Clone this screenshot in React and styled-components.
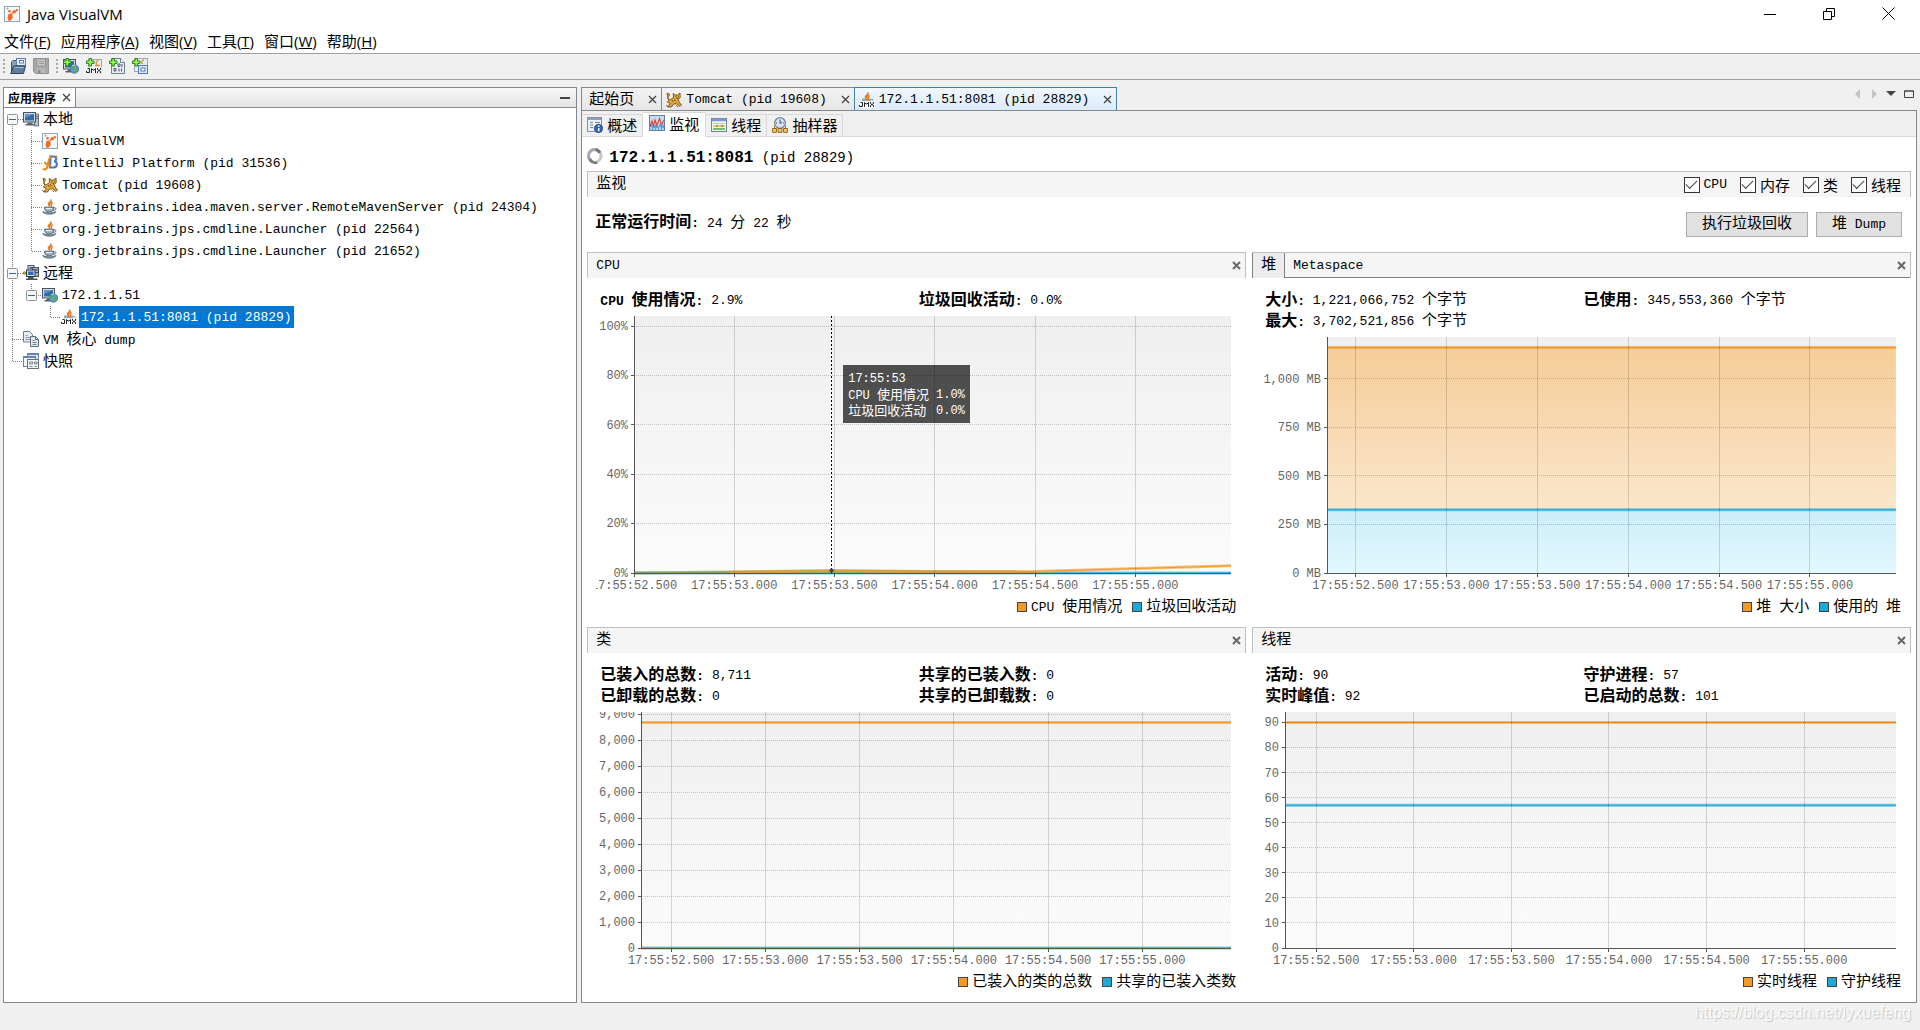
import styled, { createGlobalStyle } from 'styled-components';

const mono = '"Liberation Mono", "Noto Sans CJK SC", monospace';
const ui = '"Open Sans", "Noto Sans CJK SC", sans-serif';

const GlobalStyle = createGlobalStyle`
  * { box-sizing: border-box; }
  body { margin: 0; background: #f0f0f0; color: #000; font: 13px/20px ${mono}; }
  button { margin: 0; padding: 0; border: 0; background: none; color: inherit; font: inherit; }
  svg { display: block; flex: none; }
  h1, h2, ul { margin: 0; padding: 0; font: inherit; list-style: none; }
`;

/* ---------- text ---------- */

const Cjk = styled.span`
  font-family: "Noto Sans CJK SC", sans-serif;
  font-size: ${(props) => props.$size}px;
  line-height: 1;
`;

// Chinese runs are set a little larger than the latin ones
const Mixed = ({ children, size = 15 }) =>
  children.split(/([\u2e80-\uffef]+)/).map((part, i) =>
    i % 2 ? <Cjk key={i} $size={size}>{part}</Cjk> : part
  );

/* ---------- icons ---------- */

const Icon = ({ children, size = 16 }) => (
  <svg width={size} height={size} viewBox="0 0 16 16" aria-hidden="true">{children}</svg>
);

const VisualVmIcon = () => (
  <Icon>
    <rect x="0.5" y="0.5" width="15" height="15" fill="#f4f8fc" stroke="#8fa6bd" />
    <path d="M4.500 8 7 7.500l1.500 1.500.3 2.500L7 14.500l-2.600.3L3.500 12z" fill="#f26a21" />
    <path d="M7.500 8 9.500 6.500" stroke="#f26a21" strokeWidth="1.200" />
    <circle cx="10.300" cy="5.800" r="1.700" fill="#f26a21" />
    <circle cx="12.800" cy="4.300" r="1.200" fill="#f26a21" />
    <circle cx="5.500" cy="5.300" r="1.300" fill="#f26a21" />
    <circle cx="3.500" cy="2.600" r="1" fill="#f58a4c" />
  </Icon>
);

const IdeaIcon = () => (
  <Icon>
    <path d="M8.500 1.500h3.200c3.400 0 3.200 4.200.4 4.800 4 .2 3.600 6.200-.6 6.200H8z" fill="none" stroke="#4a78c8" strokeWidth="2.200" />
    <path d="M6.500 5.500C8 3 9 1.500 7.200 1M7 4 5.600 11c-.5 3.400-3.600 4.400-4.600 2.600M2.500 7c2 3 4 4 6.500 3.500" fill="none" stroke="#ef8a12" strokeWidth="2" />
    <circle cx="14.500" cy="1.500" r="1" fill="#ef8a12" />
  </Icon>
);

const TomcatIcon = () => (
  <Icon>
    <path d="M1 1.500c3-.8 3 2 1.200 3.500C.8 7 3 8 4.500 7.500L7.500 5.500 7.200 1.500 9.300 3h2.200L14 1l.2 4.500-1.800 2L13 10l2.500 3-1.500 1.500-3.200-2.700L7.500 12l-2 3H2l2.300-3.500L1.200 10l1.600-1.600z" fill="#d9a441" stroke="#7a4e0c" strokeWidth="0.900" />
    <path d="M9.500 4.800h.8M12 4.800h.8M10.300 6.300h1.800M6 8l1 1.500M8.500 7.500l.7 1.600M10.500 13.500l1.500 1.300M.5 13l1.500 2" stroke="#5b3908" strokeWidth="0.900" />
  </Icon>
);

const Flame = () => (
  <path d="M8.500.2c1.300 2-3.200 3-2.400 5.200.3 1 1.200 1.600 1.200 2.400 1-.8.4-1.600.8-2.600.6-1.400 3.200-1.800.4-5zM10.800 3.500C8.700 4.500 8.600 6 9.200 8c1-1 .3-2.700 1.600-4.500z" fill="#ea7d1e" stroke="#d9640a" strokeWidth="0.500" />
);

const JavaIcon = () => (
  <Icon>
    <path d="M2.500 8.200h9.300c.3 3.200-1.500 4.600-4.600 4.600S2.500 11.500 2.500 8.200z" fill="#9fb2bf" stroke="#4f6675" />
    <path d="M11.800 8.800c3-.6 3 2.400-.6 2.700" fill="none" stroke="#4f6675" />
    <path d="M.8 12.500c1 3.600 12 3.600 13.200 0-3 1.800-10 1.800-13.200 0z" fill="#8298a6" stroke="#4f6675" strokeWidth="0.800" />
    <path d="M4 9.500h6" stroke="#e8f0f5" />
    <Flame />
  </Icon>
);

const JmxMark = () => (
  <>
    <rect x="0" y="9" width="16" height="7" fill="#fff" fillOpacity="0.7" />
    <path d="M1.500 10.500h2v4h-3v-1.500M5.500 15v-4.500l1.500 1.500h1l1.500-1.500V15M11.500 10v1.500l3 2V15M14.500 10v1.500l-3 2V15" fill="none" stroke="#222" />
  </>
);

const JmxIcon = () => (
  <Icon>
    <path d="M3 6.500h9v3H3z" fill="#93a8b6" />
    <path d="M12 7.500h2v1.500" fill="none" stroke="#93a8b6" />
    <Flame />
    <JmxMark />
  </Icon>
);

const Screen = () => (
  <>
    <rect x="0.500" y="1.500" width="12" height="9.500" fill="#d5dce3" stroke="#47525e" />
    <rect x="2" y="3" width="9" height="6.500" fill="#2f6cab" />
    <path d="M2 3h9L2 7z" fill="#5d97cf" />
    <path d="M4.500 11.500h5v1.500h2.500v1.500H2.500V13h2z" fill="#57626d" />
  </>
);

const Globe = () => (
  <>
    <circle cx="11.500" cy="11" r="4.300" fill="#5b9bd0" stroke="#44738f" strokeWidth="0.800" />
    <path d="M8.500 8.500l2.500-1.200 1 2-1.500 2-2-.5zM12.500 10.500l2.500-.5-.5 3-2 1.500z" fill="#63a93c" />
    <path d="M9 7.800c1-.8 2.500-1 3.500-.5" fill="none" stroke="#e4f2fb" strokeWidth="0.800" />
  </>
);

const Plus = () => (
  <path d="M3 .5h2.500V3H8v2.500H5.500V8H3V5.500H.5V3H3z" fill="#a5ef5a" stroke="#1f8a10" />
);

const LocalIcon = () => (
  <Icon>
    <path d="M11.500 3h4v12h-4z" fill="#b9c2cb" stroke="#68727c" />
    <path d="M13 5.500h2M13 7.500h2" stroke="#68727c" />
    <Screen />
  </Icon>
);

const HostIcon = () => <Icon><Screen /><Globe /></Icon>;

const RemoteIcon = () => (
  <Icon>
    <rect x="5" y="0.500" width="6" height="5" fill="#d5dce3" stroke="#47525e" />
    <rect x="6.500" y="2" width="3" height="2" fill="#2f6cab" />
    <rect x="9.500" y="2.500" width="6" height="9" fill="#aab4be" stroke="#47525e" />
    <path d="M10 5h5M10 7.500h5" stroke="#47525e" />
    <rect x="3.500" y="5" width="8.500" height="6.500" fill="#d5dce3" stroke="#303a44" />
    <rect x="5" y="6.500" width="5.500" height="3.500" fill="#2f6cab" />
    <path d="M5 12h5.500v1.500h4V15H3v-1.500h2z" fill="#4b5560" />
    <circle cx="1.500" cy="8" r="1.300" fill="#e6a93c" stroke="#8a5a0e" strokeWidth="0.700" />
  </Icon>
);

const DumpIcon = () => (
  <Icon>
    <path d="M.5.500h6l3 3V11h-9z" fill="#e9eef3" stroke="#71808f" />
    <path d="M2.500 4.500h2M2.500 6.500h5M2.500 8.500h5" stroke="#8694a2" />
    <path d="M7.500 5.500h5l3 3v7h-8z" fill="#e1e8ee" stroke="#5e6d7c" />
    <path d="M9.500 9.500h2M9.500 11.500h4M9.500 13.500h4" stroke="#71808f" />
    <path d="M12.500 5.500v3h3" fill="none" stroke="#5e6d7c" />
  </Icon>
);

const SnapshotIcon = () => (
  <Icon>
    <rect x="4.500" y="0.500" width="11" height="9" fill="#dfe8f4" stroke="#6683b4" />
    <path d="M5 1.500h10" stroke="#6683b4" />
    <rect x="0.500" y="3.500" width="12" height="10" fill="#eef3f9" stroke="#6683b4" />
    <path d="M1 4.500h11" stroke="#6683b4" />
    <rect x="4.500" y="6.500" width="11" height="9" fill="#f2f4f6" stroke="#68727c" />
    <path d="M6.500 9h3v2h-3zM11.500 9h2.500v2h-2.500zM6.500 13.500h3M11.500 13.500H14" fill="none" stroke="#7a8590" />
  </Icon>
);

const OpenIcon = () => (
  <Icon>
    <path d="M1.500 14V4l1.500-1.500h4V14z" fill="#8aa0b4" stroke="#40566b" />
    <rect x="6.500" y="0.500" width="9" height="7" fill="#e8effa" stroke="#5a7cb8" />
    <rect x="9.500" y="2.500" width="4" height="2.500" fill="#fff" stroke="#5a7cb8" />
    <path d="M3.500 8h12L13.500 15.500H.8z" fill="#5e7f9c" stroke="#2d4459" />
    <path d="M4.500 9.500h9" stroke="#a9bdce" />
  </Icon>
);

const SaveIcon = () => (
  <Icon>
    <path d="M.5.500h15v15h-13l-2-2z" fill="#a8a8a8" stroke="#949494" />
    <path d="M4 1h8.500v7H4z" fill="#c8c8c8" stroke="#949494" />
    <path d="M6 3.500h5M6 5.500h5" stroke="#999" />
    <path d="M4 10.500h8V15H4z" fill="#b9b9b9" />
    <path d="M5 12h2.500v3H5z" fill="#8c8c8c" />
  </Icon>
);

const AddHostIcon = () => <Icon><Screen /><Globe /><Plus /></Icon>;

const AddJmxIcon = () => (
  <Icon>
    <rect x="2.500" y="1.500" width="13" height="14" fill="#e6edf4" stroke="#9aa8b6" />
    <path d="M12.500 2c-3.500 2.500-2.500 3-1.500 5M9 7.500h5" fill="none" stroke="#e58a35" strokeWidth="1.300" />
    <JmxMark />
    <Plus />
  </Icon>
);

const AddDumpIcon = () => (
  <Icon>
    <path d="M2.500.500h9l4 4v11h-13z" fill="#e8eef3" stroke="#71808f" />
    <path d="M11.500.500v4h4" fill="#fff" stroke="#71808f" />
    <path d="M9 6h2v2.500H9zM13 6v3M5 10.500h2V13H5zM10 10.500v3M12.500 10.500v3" fill="none" stroke="#4d5c6b" />
    <Plus />
  </Icon>
);

const AddSnapshotIcon = () => (
  <Icon>
    <rect x="2.500" y="0.500" width="13" height="13" fill="#e6edf4" stroke="#9aa8b6" />
    <path d="M12 1.500c-3.500 2.500-2.500 2.500-1.500 4.500" fill="none" stroke="#e58a35" strokeWidth="1.300" />
    <rect x="6.500" y="7.500" width="9" height="8" fill="#dfe9f8" stroke="#5179bd" />
    <rect x="9" y="10" width="4" height="3" fill="#fff" stroke="#5179bd" />
    <Plus />
  </Icon>
);

const OverviewIcon = () => (
  <Icon>
    <rect x="0.500" y="0.500" width="14" height="14" fill="#e9eff5" stroke="#8293a5" />
    <path d="M1 2h13" stroke="#8fa3b8" strokeWidth="2" />
    <path d="M3 5.500h3M3 8h3M3 10.500h3M8 5.500h5" stroke="#71869c" />
    <circle cx="11.500" cy="11.500" r="4.200" fill="#2f62b5" stroke="#1d458c" strokeWidth="0.700" />
    <path d="M11.700 8.500v1.400M11.700 11v3.300" stroke="#fff" strokeWidth="1.500" />
  </Icon>
);

const MonitorIcon = () => (
  <Icon>
    <rect x="0.500" y="0.500" width="15" height="15" fill="#c9dced" stroke="#5d7fa3" />
    <path d="M1 10.500 3 8l1.500 3L7 9l2 3 2.500-4 1.500 3 2-2v6H1z" fill="#59a4da" />
    <path d="M1 11l2-5 1.500 4.500L6 5l2 5.500L10.500 3.500 12.500 10l2.500-5" fill="none" stroke="#d94a4a" strokeWidth="1.200" />
    <path d="M2 15v-3M5 15v-2M8 15v-2M11 15v-3M14 15v-2" stroke="#fff" />
  </Icon>
);

const ThreadsIcon = () => (
  <Icon>
    <rect x="0.500" y="1.500" width="15" height="13" fill="#f3f6f0" stroke="#71869c" />
    <path d="M1 3h14" stroke="#7d9ac0" strokeWidth="2.500" />
    <path d="M2 6.500h12" stroke="#b9c4cf" />
    <path d="M2 9h12" stroke="#e6b63a" strokeWidth="1.500" />
    <path d="M2 12h12" stroke="#4fa83d" strokeWidth="1.500" />
    <path d="M5 9h2M10 9h2" stroke="#4fa83d" strokeWidth="1.500" />
  </Icon>
);

const SamplerIcon = () => (
  <Icon>
    <circle cx="8" cy="6" r="5.300" fill="#d6e4f1" stroke="#71869c" strokeWidth="1.300" />
    <path d="M8 2.500V6.500L10 5M4 6h1M11 6h1" fill="none" stroke="#3f546a" />
    <path d="M2.500 11V8.500M13.500 11V8.500" stroke="#a87a1e" />
    <path d="M.6 11.500h3.800v3.800H.6zM6.100 11.500h3.800v3.800H6.100zM11.600 11.500h3.800v3.800h-3.800z" fill="#f2cf72" stroke="#93600c" />
  </Icon>
);

const SpinnerIcon = () => (
  <svg width="16" height="18" viewBox="0 0 16 18" aria-hidden="true">
    <path d="M8 2.500a6 6.500 0 0 1 5 3.500" fill="none" stroke="#6f737b" strokeWidth="3" />
    <path d="M13.500 6a6 6.500 0 0 1-4 9" fill="none" stroke="#c6c8cd" strokeWidth="3" />
    <path d="M10 15.300A6 6.500 0 0 1 2.500 11.500" fill="none" stroke="#777b84" strokeWidth="3" />
    <path d="M2.300 12A6 6.500 0 0 1 8.500 2.500" fill="none" stroke="#a3a6ad" strokeWidth="3" />
  </svg>
);

const CrossIcon = ({ bold }) => (
  <svg width="9" height="9" viewBox="0 0 9 9" aria-hidden="true">
    <path d="M1 1l7 7M8 1 1 8" stroke={bold ? '#666' : '#444'} strokeWidth={bold ? 2 : 1.300} />
  </svg>
);

/* ---------- window frame ---------- */

const Window = styled.div`
  display: flex;
  flex-direction: column;
  min-height: 100vh;
`;

const TitleBar = styled.header`
  display: flex;
  align-items: center;
  height: 29px;
  padding: 0 6px 2px 4px;
  gap: 7px;
  background: #fff;
  font: 15px/20px ${ui};
`;

const WindowTitle = styled.h1`
  flex: 1;
`;

const WindowButton = styled.button`
  display: grid;
  place-items: center;
  width: 52px;
  height: 27px;
`;

const MenuBar = styled.nav`
  display: flex;
  height: 24px;
  padding: 0 4px;
  gap: 10px;
  background: #fff;
  font: 15px/24px ${ui};
`;

const ToolBar = styled.div`
  display: flex;
  align-items: center;
  height: 27px;
  padding: 0 3px 2px;
  gap: 7px;
  border-top: 1px solid #a0a0a0;
  border-bottom: 1px solid #a0a0a0;
`;

const Grip = styled.span`
  width: 2px;
  height: 14px;
  margin-right: -2px;
  background: repeating-linear-gradient(#aaa 0 2px, transparent 2px 4px);
`;

const Workspace = styled.main`
  display: grid;
  grid-template-columns: 43fr 100fr;
  flex: 1;
  gap: 4px;
  padding: 7px 3px 0;
`;

const Footer = styled.footer`
  height: 27px;
  padding: 0 9px;
  color: #fafafa;
  font: 16px/20px "Liberation Sans", sans-serif;
  text-align: right;
  text-shadow: 1px 1px 1px #c4c4c4;
`;

/* ---------- applications tree ---------- */

const SidePanel = styled.aside`
  border: 1px solid #828790;
  background: #fff;
`;

const SideHeader = styled.div`
  display: flex;
  justify-content: space-between;
  height: 20px;
  border-bottom: 1px solid #828790;
  background: linear-gradient(#f7f7f7, #e4e4e4);
`;

const SideTab = styled.div`
  display: flex;
  align-items: center;
  gap: 6px;
  padding: 0 4px;
  border-right: 1px solid #828790;
  background: #fff;
  font-weight: bold;
`;

const MinimizeButton = styled.button`
  width: 10px;
  margin-right: 6px;
`;

const TreeRow = styled.li`
  display: flex;
  align-items: center;
  height: 22px;
  white-space: pre;
`;

const NodeLabel = styled.span`
  height: 22px;
  margin-left: 2px;
  padding: 2px 2px 0;
  line-height: 20px;
  color: ${(props) => (props.$selected ? '#fff' : '#000')};
  background: ${(props) => (props.$selected ? '#0078d7' : 'transparent')};
`;

const guidePaths = {
  none: '',
  line: 'M8.500 0V22',
  tee: 'M8.500 0V22M8 11.500H19',
  end: 'M8.500 0V11.500H19',
  first: 'M8.500 12V22M8 11.500H19',
  lastBox: 'M8.500 0V11.500H19',
  midBox: 'M8.500 0V22M8 11.500H19',
};

const Guide = ({ kind }) => {
  const box = kind === 'first' || kind === 'lastBox' || kind === 'midBox';
  const drawing = (
    <svg width="19" height="22" viewBox="0 0 19 22" aria-hidden="true">
      <path d={guidePaths[kind]} fill="none" stroke="#808080" strokeDasharray="1 1" shapeRendering="crispEdges" />
      {box && (
        <>
          <rect x="3.500" y="6.500" width="10" height="10" rx="1" fill="#f8f8f8" stroke="#919191" />
          <path d="M5 11.500h7" stroke="#3b5fa8" />
        </>
      )}
    </svg>
  );
  return box ? <button aria-label="折叠">{drawing}</button> : drawing;
};

const treeNodes = [
  { guides: ['first'], icon: LocalIcon, label: '本地' },
  { guides: ['line', 'tee'], icon: VisualVmIcon, label: 'VisualVM' },
  { guides: ['line', 'tee'], icon: IdeaIcon, label: 'IntelliJ Platform (pid 31536)' },
  { guides: ['line', 'tee'], icon: TomcatIcon, label: 'Tomcat (pid 19608)' },
  { guides: ['line', 'tee'], icon: JavaIcon, label: 'org.jetbrains.idea.maven.server.RemoteMavenServer (pid 24304)' },
  { guides: ['line', 'tee'], icon: JavaIcon, label: 'org.jetbrains.jps.cmdline.Launcher (pid 22564)' },
  { guides: ['line', 'end'], icon: JavaIcon, label: 'org.jetbrains.jps.cmdline.Launcher (pid 21652)' },
  { guides: ['midBox'], icon: RemoteIcon, label: '远程' },
  { guides: ['line', 'lastBox'], icon: HostIcon, label: '172.1.1.51' },
  { guides: ['line', 'none', 'end'], icon: JmxIcon, label: '172.1.1.51:8081 (pid 28829)', selected: true },
  { guides: ['tee'], icon: DumpIcon, label: 'VM 核心 dump' },
  { guides: ['end'], icon: SnapshotIcon, label: '快照' },
];

const Applications = () => (
  <SidePanel>
    <SideHeader>
      <SideTab>
        <Mixed size={12}>应用程序</Mixed>
        <button aria-label="关闭"><CrossIcon /></button>
      </SideTab>
      <MinimizeButton aria-label="最小化">
        <svg width="10" height="2"><path d="M0 1h10" stroke="#444" strokeWidth="2" /></svg>
      </MinimizeButton>
    </SideHeader>
    <ul>
      {treeNodes.map(({ guides, icon: NodeIcon, label, selected }, i) => (
        <TreeRow key={i}>
          {guides.map((kind, n) => <Guide key={n} kind={kind} />)}
          <NodeIcon />
          <NodeLabel $selected={selected}><Mixed>{label}</Mixed></NodeLabel>
        </TreeRow>
      ))}
    </ul>
  </SidePanel>
);

/* ---------- documents ---------- */

const Documents = styled.section`
  display: flex;
  flex-direction: column;
  min-width: 0;
`;

const DocTabs = styled.div`
  display: flex;
  height: 23px;
`;

const DocTab = styled.div`
  display: flex;
  align-items: center;
  gap: 4px;
  padding: 0 4px;
  border: 1px solid ${(props) => (props.$active ? '#3c7fb1' : '#828790')};
  border-bottom: 0;
  border-right-width: ${(props) => (props.$active ? 1 : 0)}px;
  background: ${(props) => (props.$active ? 'linear-gradient(#f0f7fe, #dcebfc)' : 'linear-gradient(#f3f3f3, #e6e6e6)')};
`;

const DocTabButton = styled.button`
  display: flex;
  align-items: center;
  gap: 4px;
  padding-top: 2px;
  padding-left: ${(props) => (props.$plain ? 3 : 0)}px;
  margin-right: 10px;
  white-space: pre;
`;

const DocNav = styled.div`
  display: flex;
  gap: 8px;
  height: 14px;
  margin-left: auto;
  padding-right: 3px;
`;

const Frame = styled.div`
  display: flex;
  flex: 1;
  flex-direction: column;
  border: 1px solid #828790;
  background: #fff;
`;

const ViewTabs = styled.div`
  display: flex;
  align-items: flex-end;
  height: 26px;
  background: linear-gradient(#f0f0f0 0 25px, #d9d9d9 25px);
`;

const ViewTab = styled.button`
  display: flex;
  align-items: center;
  gap: 4px;
  height: ${(props) => (props.$active ? 25 : 23)}px;
  padding: ${(props) => (props.$active ? '0 6px 4px' : '0 5px 2px')};
  border: solid #d9d9d9;
  border-width: 1px 1px ${(props) => (props.$active ? 0 : 1)}px 0;
  background: ${(props) => (props.$active ? '#fff' : '#f0f0f0')};
`;

const SourceTitle = styled.h2`
  display: flex;
  align-items: center;
  gap: 6px;
  height: 34px;
  padding: 4px 5px 0;
  font-size: 14px;
  line-height: 24px;
  white-space: pre;
`;

const SourceText = styled.span`
  padding-top: 3px;
`;

const SourceName = styled.strong`
  font-size: 16px;
`;

const Content = styled.div`
  display: flex;
  flex: 1;
  flex-direction: column;
  padding: 0 5px;
`;

const SectionBar = styled.div`
  display: flex;
  align-items: center;
  justify-content: space-between;
  height: 26px;
  padding: 0 9px 0 8px;
  border: solid #bfbfbf;
  border-width: 1px 1px 0;
  background: #f5f5f5;
`;

const Checks = styled.div`
  display: flex;
  gap: 13px;
`;

const CheckLabel = styled.label`
  display: flex;
  align-items: center;
  gap: 4px;
  line-height: 18px;
`;

const CheckBox = styled.input`
  display: grid;
  place-items: center;
  width: 16px;
  height: 16px;
  margin: 0;
  appearance: none;
  border: 1px solid #333;
  background: #fff;

  &:checked::before {
    content: "";
    width: 10px;
    height: 5px;
    margin-bottom: 3px;
    border: solid #444;
    border-width: 0 0 1px 1px;
    transform: rotate(-45deg);
  }
`;

const Summary = styled.div`
  display: flex;
  justify-content: space-between;
  height: 55px;
  padding: 15px 9px 0 8px;
  white-space: pre;
`;

const Uptime = styled.div`
  line-height: 18px;
`;

const Actions = styled.div`
  display: flex;
  gap: 8px;
`;

const ActionButton = styled.button`
  height: 25px;
  padding: 0 15px;
  border: 1px solid #adadad;
  background: #e1e1e1;
`;

const Graphs = styled.div`
  display: grid;
  grid-template-columns: 1fr 1fr;
  grid-template-rows: 1fr 1fr;
  flex: 1;
  column-gap: 6px;
`;

/* ---------- graph panels ---------- */

const Panel = styled.section`
  display: flex;
  flex-direction: column;
  min-width: 0;
`;

const PanelBar = styled.div`
  display: flex;
  align-items: center;
  height: 26px;
  padding-right: 4px;
  padding-left: ${(props) => (props.$tabbed ? 0 : 8)}px;
  border: solid #bfbfbf;
  border-width: ${(props) => (props.$tabbed ? '1px 1px 0 0' : '1px 1px 0')};
  background: #f5f5f5;
  box-shadow: ${(props) => (props.$tabbed ? 'inset 0 -1px #808080' : 'none')};
`;

const PanelTab = styled.button`
  height: 25px;
  padding: 0 8px;
  border: solid #808080;
  border-width: ${(props) => (props.$active ? '0 1px 0 1px' : 0)};
  background: ${(props) => (props.$active ? '#ececec' : 'transparent')};
`;

const PanelClose = styled.button`
  margin-left: auto;
`;

const Details = styled.dl`
  display: grid;
  grid-template-columns: 1fr 1fr;
  margin: 12px 9px 5px 13px;
  line-height: 21px;
  white-space: pre;
`;

const Detail = styled.div`
  display: flex;
  height: 21px;
`;

const DetailName = styled.dt`
  font-weight: bold;
`;

const DetailValue = styled.dd`
  margin: 0;
`;

const ChartBox = styled.div`
  display: flex;
  flex: 1;
  min-height: 120px;
  margin-left: 9px;
  padding: 0 15px 24px ${(props) => props.$axis}px;
  overflow: hidden;
`;

const Plot = styled.div`
  position: relative;
  display: flex;
  flex: 1;
  background: linear-gradient(#efefef, #fbfbfb);
`;

const PlotSvg = styled.svg`
  flex: 1;
  min-width: 0;
  overflow: visible;
  font-size: 12px;
  fill: #666;
`;

const Tooltip = styled.div`
  position: absolute;
  top: 49px;
  left: 35%;
  display: grid;
  grid-template-columns: auto auto;
  column-gap: 7px;
  padding: 6px 5px 4px;
  background: rgba(0, 0, 0, 0.68);
  color: #fff;
  font-size: 12px;
  line-height: 16px;
  white-space: pre;
`;

const TooltipTime = styled.div`
  grid-column: 1 / 3;
`;

const TooltipCell = styled.div`
  height: 16px;
`;

const Legend = styled.div`
  display: flex;
  justify-content: flex-end;
  gap: 10px;
  height: 30px;
  padding-right: 10px;
  white-space: pre;
`;

const LegendItem = styled.span`
  display: flex;
  align-items: center;
  gap: 4px;
  height: 20px;
`;

const Swatch = styled.span`
  width: 10px;
  height: 10px;
  border: 1px solid #444;
  background: ${(props) => props.$color};
`;

const ORANGE = '#f39a26';
const BLUE = '#1fa8d8';
const times = ['17:55:52.500', '17:55:53.000', '17:55:53.500', '17:55:54.000', '17:55:54.500', '17:55:55.000'];
const pct = (n) => `${n}%`;

// series points are [x%, y%] measured from the top left of the plot
const SeriesLine = ({ points, color }) =>
  points.slice(1).map(([x, y], i) => {
    const [px, py] = points[i];
    const ends = { x1: pct(px), y1: pct(py), x2: pct(x), y2: pct(y), stroke: color };
    return (
      <g key={i}>
        <line {...ends} strokeWidth="3" opacity="0.6" />
        <line {...ends} strokeWidth="1" />
      </g>
    );
  });

const Chart = ({ axis, rows, firstTick, tickStep, series, fills, cursor, children }) => (
  <ChartBox $axis={axis}>
    <Plot>
      <PlotSvg>
        <defs>
          <linearGradient id="orangeFill" x1="0" y1="0" x2="0" y2="1">
            <stop offset="0" stopColor="#f5cd98" />
            <stop offset="1" stopColor="#fdf0e0" />
          </linearGradient>
          <linearGradient id="blueFill" x1="0" y1="0" x2="0" y2="1">
            <stop offset="0" stopColor="#cbeefa" />
            <stop offset="1" stopColor="#e3f8ff" />
          </linearGradient>
        </defs>
        {fills && fills.map(([top, id]) => (
          <rect key={id} x="0" y={pct(top)} width="100%" height={pct(100 - top)} fill={`url(#${id})`} />
        ))}
        {series.map((s, i) => <SeriesLine key={i} {...s} />)}
        {rows.map(([label, y]) => (
          <g key={label}>
            <line x1="0" x2="100%" y1={pct(y)} y2={pct(y)} stroke="#000" strokeOpacity="0.2" strokeDasharray="1 1" shapeRendering="crispEdges" />
            <line x1="-3" x2="0" y1={pct(y)} y2={pct(y)} stroke="#555" shapeRendering="crispEdges" />
            <text x="-6" y={pct(y)} dy="4" textAnchor="end">{label}</text>
          </g>
        ))}
        {times.map((time, i) => {
          const x = pct(firstTick + i * tickStep);
          return (
            <g key={time}>
              <line x1={x} x2={x} y1="0" y2="100%" stroke="#000" strokeOpacity="0.15" shapeRendering="crispEdges" />
              <svg x={x} y="100%" overflow="visible">
                <path d="M0 0V4" stroke="#555" shapeRendering="crispEdges" />
                <text y="16" textAnchor="middle">{time}</text>
              </svg>
            </g>
          );
        })}
        <line x1="0" x2="0" y1="0" y2="100%" stroke="#555" shapeRendering="crispEdges" />
        <line x1="0" x2="100%" y1="100%" y2="100%" stroke="#555" shapeRendering="crispEdges" />
        {cursor && (
          <>
            <line x1={pct(cursor)} x2={pct(cursor)} y1="0" y2="100%" stroke="#000" strokeDasharray="2 2" shapeRendering="crispEdges" />
            <circle cx={pct(cursor)} cy="99%" r="2" fill="#444" />
          </>
        )}
      </PlotSvg>
      {children}
    </Plot>
  </ChartBox>
);

const flat = (y, color) => ({ color, points: [[0, y], [100, y]] });

const GraphPanel = ({ title, tabs, details, legend, chart, children }) => (
  <Panel>
    <PanelBar $tabbed={tabs}>
      {tabs
        ? tabs.map((tab, i) => <PanelTab key={tab} $active={i === 0}><Mixed>{tab}</Mixed></PanelTab>)
        : <h2><Mixed>{title}</Mixed></h2>}
      <PanelClose aria-label="关闭"><CrossIcon bold /></PanelClose>
    </PanelBar>
    <Details>
      {details.map(([name, value]) => (
        <Detail key={name}>
          <DetailName><Mixed size={16}>{`${name}: `}</Mixed></DetailName>
          <DetailValue><Mixed>{value}</Mixed></DetailValue>
        </Detail>
      ))}
    </Details>
    <Chart {...chart}>{children}</Chart>
    <Legend>
      {legend.map((label, i) => (
        <LegendItem key={label}>
          <Swatch $color={i ? BLUE : ORANGE} />
          <span><Mixed>{label}</Mixed></span>
        </LegendItem>
      ))}
    </Legend>
  </Panel>
);

const cpuChart = {
  axis: 38,
  firstTick: 0,
  tickStep: 16.8,
  cursor: 33.1,
  rows: [['100%', 3.900], ['80%', 23.100], ['60%', 42.300], ['40%', 61.500], ['20%', 80.700], ['0%', 100]],
  series: [
    flat(100, BLUE),
    { color: '#8aa046', points: [[0, 100], [16, 99.600], [33.100, 99.100], [50, 99.400], [67, 99.500]] },
    { color: ORANGE, points: [[16, 99.700], [33.100, 99.200], [50, 99.500], [67, 99.400], [100, 97.200]] },
  ],
};

const heapChart = {
  axis: 66,
  firstTick: 5,
  tickStep: 15.980,
  rows: [['1,000 MB', 17.600], ['750 MB', 38.200], ['500 MB', 58.800], ['250 MB', 79.300], ['0 MB', 100]],
  fills: [[4.400, 'orangeFill'], [73.200, 'blueFill']],
  series: [flat(4.400, ORANGE), flat(73.200, BLUE)],
};

const classChart = {
  axis: 45,
  firstTick: 5.100,
  tickStep: 15.980,
  rows: [9, 8, 7, 6, 5, 4, 3, 2, 1, 0].map((n) => [n ? `${n},000` : '0', 100 - n * 11]),
  series: [flat(4.400, ORANGE), flat(100, BLUE)],
};

const threadChart = {
  axis: 24,
  firstTick: 5.100,
  tickStep: 15.980,
  rows: [90, 80, 70, 60, 50, 40, 30, 20, 10, 0].map((n) => [String(n), 100 - n * 1.062]),
  series: [flat(4.400, ORANGE), flat(39.500, BLUE)],
};

const menus = [['文件', 'F'], ['应用程序', 'A'], ['视图', 'V'], ['工具', 'T'], ['窗口', 'W'], ['帮助', 'H']];

const docTabs = [
  { label: '起始页' },
  { label: 'Tomcat (pid 19608)', icon: TomcatIcon },
  { label: '172.1.1.51:8081 (pid 28829)', icon: JmxIcon, active: true },
];

const viewTabs = [
  { label: '概述', icon: OverviewIcon },
  { label: '监视', icon: MonitorIcon, active: true },
  { label: '线程', icon: ThreadsIcon },
  { label: '抽样器', icon: SamplerIcon },
];

const App = () => (
  <>
    <GlobalStyle />
    <Window>
      <TitleBar>
        <VisualVmIcon />
        <WindowTitle>Java VisualVM</WindowTitle>
        <WindowButton aria-label="最小化">
          <svg width="12" height="12"><path d="M0 6.500h12" stroke="#000" /></svg>
        </WindowButton>
        <WindowButton aria-label="还原">
          <svg width="12" height="12"><path d="M.5 3.500h8v8h-8zM3.500 3V.500h8v8H9" fill="none" stroke="#000" /></svg>
        </WindowButton>
        <WindowButton aria-label="关闭">
          <svg width="13" height="13"><path d="M.5.500l12 12M12.500.500l-12 12" stroke="#000" /></svg>
        </WindowButton>
      </TitleBar>
      <MenuBar>
        {menus.map(([label, key]) => (
          <button key={key}>{label}(<u>{key}</u>)</button>
        ))}
      </MenuBar>
      <ToolBar>
        <Grip />
        <button aria-label="打开"><OpenIcon /></button>
        <button aria-label="保存"><SaveIcon /></button>
        <Grip />
        <button aria-label="添加主机"><AddHostIcon /></button>
        <button aria-label="添加 JMX 连接"><AddJmxIcon /></button>
        <button aria-label="添加核心 dump"><AddDumpIcon /></button>
        <button aria-label="添加快照"><AddSnapshotIcon /></button>
      </ToolBar>
      <Workspace>
        <Applications />
        <Documents>
          <DocTabs>
            {docTabs.map(({ label, icon: TabIcon, active }) => (
              <DocTab key={label} $active={active}>
                <DocTabButton $plain={!TabIcon}>
                  {TabIcon && <TabIcon />}
                  <span><Mixed>{label}</Mixed></span>
                </DocTabButton>
                <button aria-label="关闭"><CrossIcon /></button>
              </DocTab>
            ))}
            <DocNav>
              <button aria-label="上一个"><svg width="8" height="10"><path d="M6 0v10L1 5z" fill="#c4c4c4" /></svg></button>
              <button aria-label="下一个"><svg width="8" height="10"><path d="M2 0v10l5-5z" fill="#c4c4c4" /></svg></button>
              <button aria-label="列表"><svg width="10" height="6"><path d="M0 0h10L5 5z" fill="#444" /></svg></button>
              <button aria-label="最大化"><svg width="10" height="8"><path d="M.5 1h9v6.500h-9zM0 1h10" fill="none" stroke="#444" /></svg></button>
            </DocNav>
          </DocTabs>
          <Frame>
            <ViewTabs>
              {viewTabs.map(({ label, icon: TabIcon, active }) => (
                <ViewTab key={label} $active={active}>
                  <TabIcon />
                  <Mixed>{label}</Mixed>
                </ViewTab>
              ))}
            </ViewTabs>
            <SourceTitle>
              <SpinnerIcon />
              <SourceText><SourceName>172.1.1.51:8081</SourceName> (pid 28829)</SourceText>
            </SourceTitle>
            <Content>
              <SectionBar>
                <h2><Mixed>监视</Mixed></h2>
                <Checks>
                  {['CPU', '内存', '类', '线程'].map((label) => (
                    <CheckLabel key={label}>
                      <CheckBox type="checkbox" defaultChecked />
                      <Mixed>{label}</Mixed>
                    </CheckLabel>
                  ))}
                </Checks>
              </SectionBar>
              <Summary>
                <Uptime>
                  <strong><Mixed size={16}>{'正常运行时间: '}</Mixed></strong>
                  <Mixed>24 分 22 秒</Mixed>
                </Uptime>
                <Actions>
                  <ActionButton><Mixed>执行垃圾回收</Mixed></ActionButton>
                  <ActionButton><Mixed>堆 Dump</Mixed></ActionButton>
                </Actions>
              </Summary>
              <Graphs>
                <GraphPanel
                  title="CPU"
                  details={[['CPU 使用情况', '2.9%'], ['垃圾回收活动', '0.0%']]}
                  legend={['CPU 使用情况', '垃圾回收活动']}
                  chart={cpuChart}
                >
                  <Tooltip>
                    <TooltipTime>17:55:53</TooltipTime>
                    <TooltipCell><Mixed size={13}>CPU 使用情况</Mixed></TooltipCell>
                    <TooltipCell>1.0%</TooltipCell>
                    <TooltipCell><Mixed size={13}>垃圾回收活动</Mixed></TooltipCell>
                    <TooltipCell>0.0%</TooltipCell>
                  </Tooltip>
                </GraphPanel>
                <GraphPanel
                  tabs={['堆', 'Metaspace']}
                  details={[['大小', '1,221,066,752 个字节'], ['已使用', '345,553,360 个字节'], ['最大', '3,702,521,856 个字节']]}
                  legend={['堆 大小', '使用的 堆']}
                  chart={heapChart}
                />
                <GraphPanel
                  title="类"
                  details={[['已装入的总数', '8,711'], ['共享的已装入数', '0'], ['已卸载的总数', '0'], ['共享的已卸载数', '0']]}
                  legend={['已装入的类的总数', '共享的已装入类数']}
                  chart={classChart}
                />
                <GraphPanel
                  title="线程"
                  details={[['活动', '90'], ['守护进程', '57'], ['实时峰值', '92'], ['已启动的总数', '101']]}
                  legend={['实时线程', '守护线程']}
                  chart={threadChart}
                />
              </Graphs>
            </Content>
          </Frame>
        </Documents>
      </Workspace>
      <Footer>https://blog.csdn.net/lyxuefeng</Footer>
    </Window>
  </>
);

export default App;
